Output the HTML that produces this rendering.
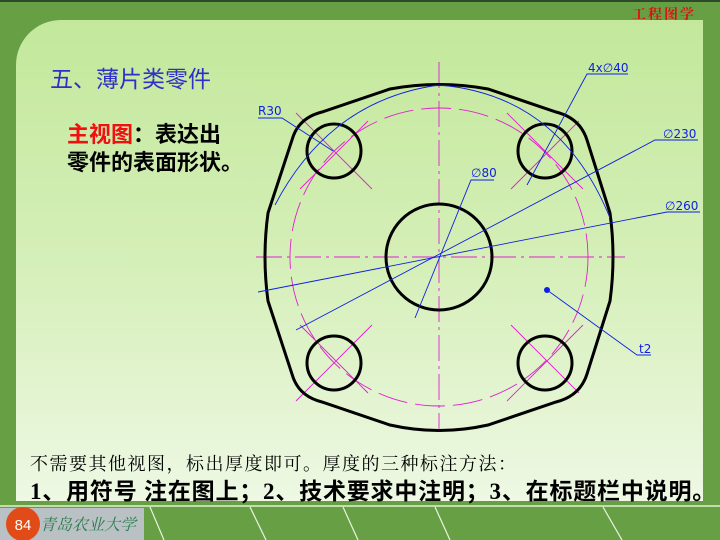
<!DOCTYPE html>
<html><head><meta charset="utf-8"><style>
html,body{margin:0;padding:0}
body{width:720px;height:540px;position:relative;overflow:hidden;background:#67a044;font-family:"Liberation Sans","Noto Sans CJK SC",sans-serif}
.top{position:absolute;left:0;top:0;width:720px;height:2px;background:#2e4a28}
.panel{position:absolute;left:16px;top:20px;width:687px;height:481px;border-top-left-radius:45px;background:linear-gradient(#c3e89b 0%,#d5efb8 50%,#eef8e4 100%)}
.t{position:absolute;white-space:nowrap}
</style></head><body>
<div class="top"></div>
<div class="t" style="left:632px;top:4px;color:#e01010;font:bold 14px 'Noto Serif CJK SC',serif;letter-spacing:2px">工程图学</div>
<div class="panel"></div>
<div class="t" style="left:50px;top:60px;color:#3030c8;font-size:23px">五、薄片类零件</div>
<div class="t" style="left:67px;top:121px;font-size:22px;font-weight:bold;line-height:28px;color:#000"><span style="color:#f01010">主视图</span>：表达出<br>零件的表面形状。</div>
<div class="t" style="left:30px;top:450px;font:18px 'Liberation Serif','Noto Serif CJK SC',serif;letter-spacing:1.5px;color:#000">不需要其他视图，标出厚度即可。厚度的三种标注方法：</div>
<div class="t" style="left:30px;top:472px;font:bold 23px 'Liberation Serif','Noto Sans CJK SC',serif;letter-spacing:0.8px;color:#000">1、用符号 注在图上；2、技术要求中注明；3、在标题栏中说明。</div>
<svg width="720" height="540" style="position:absolute;left:0;top:0">
<line x1="0" y1="506" x2="720" y2="506" stroke="#dff0d0" stroke-width="1.5"/>
<g stroke="#e8f4e0" stroke-width="1.2">
<line x1="150" y1="507" x2="164" y2="540"/><line x1="250" y1="507" x2="266" y2="540"/>
<line x1="343" y1="507" x2="358" y2="540"/><line x1="435" y1="507" x2="450" y2="540"/>
<line x1="603" y1="507" x2="622" y2="540"/>
</g>
<rect x="0" y="508" width="144" height="32" fill="#b9c1c4"/>
<text x="40" y="530" font-family="Noto Serif CJK SC,serif" font-size="16" font-style="italic" fill="#2a7a4a">青岛农业大学</text>
<circle cx="23" cy="524" r="17" fill="#e04b18"/>
<text x="23" y="530" text-anchor="middle" font-family="Liberation Sans" font-size="15" fill="#fff">84</text>
<g stroke="#e020d0" stroke-width="0.9" fill="none">
<line x1="439" y1="62" x2="439" y2="430" stroke-dasharray="26,5,3,5"/>
<line x1="256" y1="257" x2="625" y2="257" stroke-dasharray="26,5,3,5"/>
<circle cx="439" cy="257" r="149" stroke-dasharray="30,8"/>
<g>
<line x1="296" y1="113" x2="372" y2="189"/><line x1="300" y1="189" x2="368" y2="121"/>
<line x1="507" y1="113" x2="583" y2="189"/><line x1="511" y1="189" x2="579" y2="121"/>
<line x1="296" y1="401" x2="372" y2="325"/><line x1="300" y1="325" x2="368" y2="393"/>
<line x1="507" y1="401" x2="583" y2="325"/><line x1="511" y1="325" x2="579" y2="393"/>
</g>
</g>
<g stroke="#000" stroke-width="3" fill="none">
<path d="M390,89 Q439,80 488,89 L556,112 Q580,118 587,140 L610,213 Q616,257 610,301 L587,374 Q580,396 556,402 L488,425 Q439,436 390,425 L322,402 Q298,396 292,374 L268,301 Q262,257 268,213 L292,140 Q298,118 322,112 Z"/>
<circle cx="439" cy="257" r="53"/>
<circle cx="334" cy="151" r="27"/><circle cx="545" cy="151" r="27"/>
<circle cx="334" cy="363" r="27"/><circle cx="545" cy="363" r="27"/>
</g>
<g stroke="#1020e0" stroke-width="0.9" fill="none">
<path d="M275,205 Q330,100 439,85 Q560,95 610,218"/>
<polyline points="258,118 282,118 333,151"/>
<polyline points="527,185 587,74 628,74"/>
<polyline points="415,318 471,180 494,180"/>
<polyline points="296,330 655,140 698,140"/>
<polyline points="258,292 667,212 700,212"/>
<polyline points="547,290 637,355 651,355"/>
</g>
<circle cx="547" cy="290" r="3" fill="#1020e0"/>
<g font-family="DejaVu Sans,sans-serif" font-size="12" fill="#1020e0">
<text x="258" y="115">R30</text>
<text x="588" y="72">4x∅40</text>
<text x="471" y="177">∅80</text>
<text x="663" y="138">∅230</text>
<text x="665" y="210">∅260</text>
<text x="639" y="353">t2</text>
</g>
</svg>
</body></html>
